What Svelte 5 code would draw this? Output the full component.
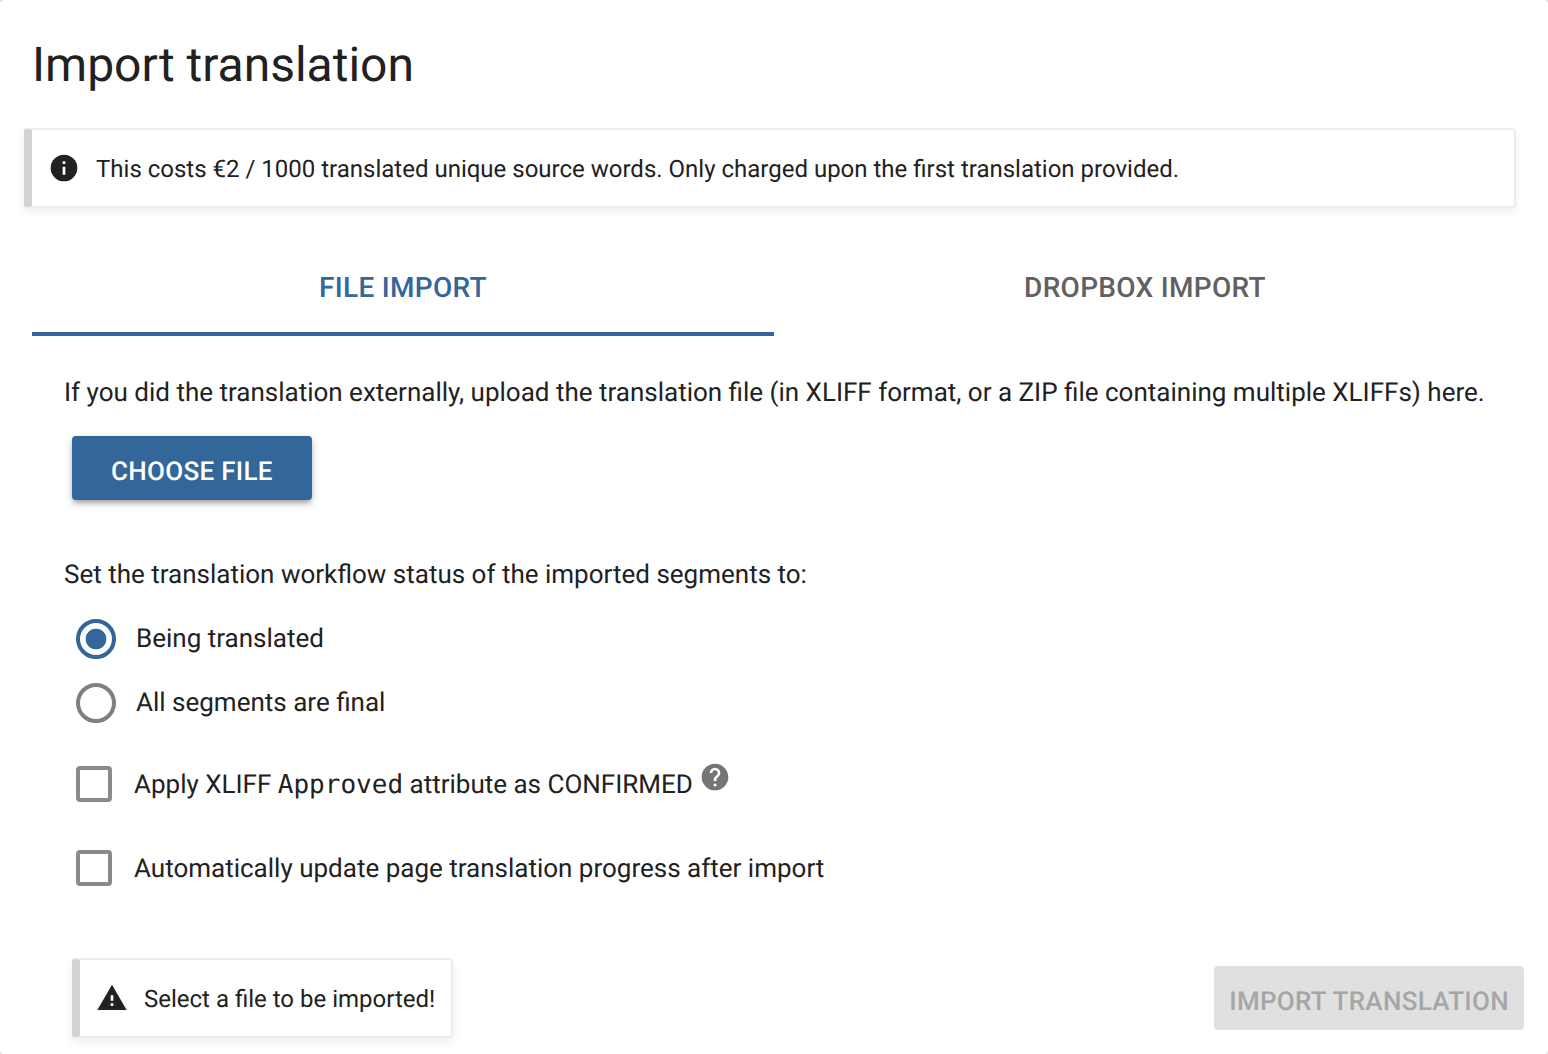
<script>
	let status = $state('progress');

	const statuses = [
		{ key: 'progress', label: 'Being translated' },
		{ key: 'final', label: 'All segments are final' }
	];
</script>

<div class="dialog">
	<h1>Import translation</h1>

	<div class="alert info">
		<svg class="alert-icon" viewBox="0 0 24 24" width="32" height="32">
			<path d="M13 9h-2V7h2m0 10h-2v-6h2m-1-9A10 10 0 0 0 2 12a10 10 0 0 0 10 10 10 10 0 0 0 10-10A10 10 0 0 0 12 2z" />
		</svg>
		<span class="alert-text">This costs €2 / 1000 translated unique source words. Only charged upon the first translation provided.</span>
	</div>

	<div class="tabs">
		<div class="tab active">FILE IMPORT</div>
		<div class="tab">DROPBOX IMPORT</div>
	</div>

	<div class="body">
		<p class="intro">If you did the translation externally, upload the translation file (in XLIFF format, or a ZIP file containing multiple XLIFFs) here.</p>
		<button class="btn primary">CHOOSE FILE</button>

		<p class="status-label">Set the translation workflow status of the imported segments to:</p>
		<div class="radios">
			{#each statuses as s}
				<button class="radio-row" onclick={() => (status = s.key)}>
					<span class="radio" class:on={status === s.key}></span>
					<span>{s.label}</span>
				</button>
			{/each}
		</div>

		<div class="check-row first">
			<span class="box"></span>
			<span class="check-label">Apply XLIFF <code>Approved</code> attribute as CONFIRMED</span>
			<svg class="help" viewBox="0 0 24 24" width="32" height="32">
				<path d="M15.07 11.25l-.9.92C13.45 12.89 13 13.5 13 15h-2v-.5c0-1.11.45-2.11 1.17-2.83l1.24-1.26c.37-.36.59-.86.59-1.41a2 2 0 0 0-2-2 2 2 0 0 0-2 2H8a4 4 0 0 1 4-4 4 4 0 0 1 4 4c0 .88-.36 1.67-.93 2.25M13 19h-2v-2h2M12 2A10 10 0 0 0 2 12a10 10 0 0 0 10 10 10 10 0 0 0 10-10c0-5.53-4.5-10-10-10z" />
			</svg>
		</div>
		<div class="check-row">
			<span class="box"></span>
			<span class="check-label">Automatically update page translation progress after import</span>
		</div>

		<div class="footer">
			<div class="alert warn">
				<svg class="alert-icon" viewBox="0 0 24 24" width="32" height="32">
					<path d="M13 14h-2v-4h2m0 8h-2v-2h2M1 21h22L12 2 1 21z" />
				</svg>
				<span class="alert-text">Select a file to be imported!</span>
			</div>
			<button class="btn disabled" disabled>IMPORT TRANSLATION</button>
		</div>
	</div>
</div>

<style>
	:global(body) {
		margin: 0;
		background: #d8d8d8;
	}

	.dialog {
		width: 1548px;
		height: 1054px;
		box-sizing: border-box;
		overflow: hidden;
		background: #fff;
		border-radius: 4px;
		font-family: Roboto, sans-serif;
		font-size: 24px;
		color: #212121;
		padding: 0 32px 0 24px;
		text-rendering: geometricPrecision;
	}

	h1 {
		margin: 0;
		padding: 33px 0 0 8px;
		height: 95px;
		font-size: 48px;
		line-height: 64px;
		font-weight: 400;
		box-sizing: content-box;
	}

	.alert {
		display: flex;
		align-items: center;
		background: #fff;
		border: 2px solid #ececec;
		border-left: 8px solid #d3d3d3;
		border-radius: 4px;
		box-sizing: border-box;
		box-shadow: 0 4px 8px rgba(0, 0, 0, 0.07);
	}

	.alert.info {
		height: 80px;
		padding-left: 16px;
		gap: 16px;
	}

	.alert-icon {
		flex: none;
		fill: #212121;
	}

	.alert-text {
		padding-top: 2px;
	}

	.tabs {
		display: flex;
		margin: 32px 0 0 8px;
	}

	.tab {
		flex: 1;
		height: 96px;
		box-sizing: border-box;
		display: flex;
		align-items: center;
		justify-content: center;
		font-size: 28px;
		font-weight: 500;
		letter-spacing: 0.3px;
		color: #616161;
		border-bottom: 4px solid transparent;
		padding-top: 2px;
	}

	.tab.active {
		color: #336699;
		border-bottom-color: #336699;
	}

	.body {
		padding: 0 0 0 16px;
	}

	p {
		margin: 0;
		padding-left: 24px;
		font-size: 26px;
	}

	.intro {
		padding-top: 41px;
		line-height: 32px;
	}

	.btn {
		font-family: inherit;
		font-size: 26px;
		font-weight: 500;
		letter-spacing: 0.3px;
		height: 64px;
		border: none;
		border-radius: 4px;
		padding: 8px 39px 0;
		text-rendering: geometricPrecision;
	}

	.primary {
		display: block;
		margin: 27px 0 0 32px;
		background: #336699;
		color: #fff;
		box-shadow: 0 4px 4px -2px rgba(0, 0, 0, 0.2), 0 4px 6px rgba(0, 0, 0, 0.14), 0 2px 10px rgba(0, 0, 0, 0.12);
	}

	.status-label {
		padding-top: 59px;
		line-height: 32px;
	}

	.radios {
		margin: 16px 0 0 36px;
	}

	.radio-row {
		display: flex;
		align-items: center;
		gap: 20px;
		height: 64px;
		width: 100%;
		padding: 0;
		border: none;
		background: none;
		font: inherit;
		font-size: 26px;
		color: inherit;
		text-rendering: geometricPrecision;
	}

	.radio {
		width: 40px;
		height: 40px;
		box-sizing: border-box;
		border: 4px solid #808080;
		border-radius: 50%;
		background: #fff;
	}

	.radio.on {
		border-color: #336699;
		background: radial-gradient(circle, #336699 0 10px, #fff 10.7px);
	}

	.check-row {
		display: flex;
		align-items: center;
		height: 84px;
		margin-left: 36px;
		font-size: 26px;
		white-space: nowrap;
	}

	.check-row.first {
		margin-top: 7px;
	}

	.check-label {
		padding-top: 2px;
	}

	.box {
		width: 36px;
		height: 36px;
		box-sizing: border-box;
		border: 4px solid #8a8a8a;
		border-radius: 4px;
		margin-right: 22px;
		flex: none;
	}

	code {
		font-family: "DejaVu Sans Mono", monospace;
		font-size: 26px;
	}

	.help {
		fill: #757575;
		margin: -14px 0 0 6px;
	}

	.footer {
		display: flex;
		justify-content: space-between;
		align-items: flex-start;
		margin: 48px 0 0 32px;
	}

	.alert.warn {
		height: 80px;
		padding: 0 16px;
		gap: 16px;
		font-size: 24px;
	}

	.disabled {
		background: #e0e0e0;
		color: #a6a6a6;
		padding: 8px 15px 0;
		margin: 8px -8px 0 0;
	}
</style>
